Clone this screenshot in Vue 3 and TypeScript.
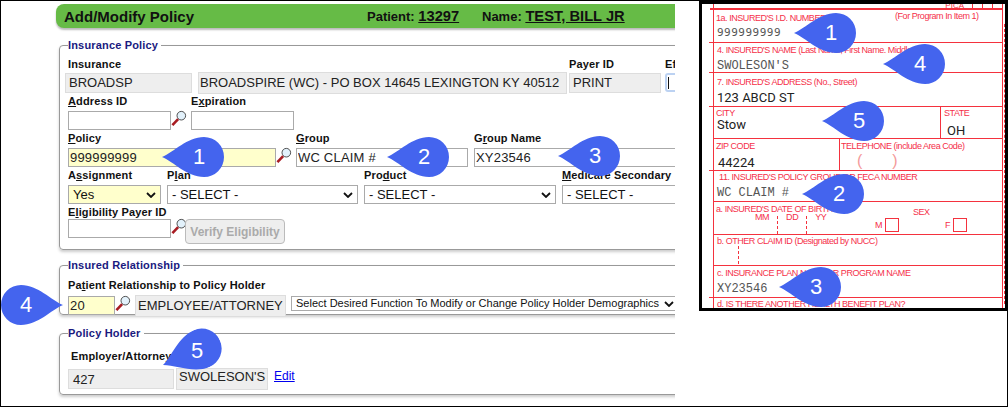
<script setup lang="ts">
interface Pin { n: number; x: number; y: number; rot: number }
const pins: Pin[] = [
  { n: 1, x: 162, y: 157, rot: 0 },
  { n: 2, x: 387, y: 157, rot: 0 },
  { n: 3, x: 558, y: 156, rot: 0 },
  { n: 4, x: 63, y: 305, rot: 180 },
  { n: 5, x: 163, y: 365, rot: -23 },
  { n: 1, x: 794, y: 33, rot: 0 },
  { n: 4, x: 883, y: 64, rot: 0 },
  { n: 5, x: 822, y: 121, rot: 0 },
  { n: 2, x: 802, y: 194, rot: 0 },
  { n: 3, x: 779, y: 287, rot: 0 },
]
function pinStyle(p: Pin) {
  return { left: `${p.x}px`, top: `${p.y - 20}px`, transform: `rotate(${p.rot}deg)` }
}
function numStyle(p: Pin) {
  const a = (p.rot * Math.PI) / 180
  return { left: `${p.x + 37 * Math.cos(a) - 12}px`, top: `${p.y + 37 * Math.sin(a) - 13}px` }
}
</script>

<template>
  <div class="frame">
    <main class="left">
      <header class="bar">
        <h1>Add/Modify Policy</h1>
        <div class="pat"><span>Patient:</span> <u>13297</u></div>
        <div class="nam"><span>Name:</span> <u>TEST, BILL JR</u></div>
      </header>

      <fieldset class="fs fs-policy">
        <legend>Insurance Policy</legend>
        <div class="row row-a">
          <div class="field w-ins"><label>Insurance</label><div class="ro ro-ins">BROADSP</div></div>
          <div class="field w-name"><label>&nbsp;</label><div class="ro ro-name">BROADSPIRE (WC) - PO BOX 14645 LEXINGTON KY 40512</div></div>
          <div class="field w-pay"><label>Payer ID</label><div class="ro ro-ins">PRINT</div></div>
          <div class="field w-eff"><label>Effective</label><div class="focus"><i></i></div></div>
        </div>
        <div class="row">
          <div class="field"><label><u>A</u>ddress ID</label>
            <div class="ctl"><input class="in w103" /><svg class="mag" viewBox="0 0 16 16"><circle cx="11" cy="5" r="4.6" fill="#e2f1fb" stroke="#333" stroke-width=".9"/><path d="M7.6 8.6 1.5 15" stroke="#a81c22" stroke-width="2.8"/></svg></div></div>
          <div class="field exp"><label>E<u>x</u>piration</label><input class="in w103" /></div>
        </div>
        <div class="row">
          <div class="field"><label><u>P</u>olicy</label>
            <div class="ctl"><input class="in req w208" value="999999999" /><svg class="mag" viewBox="0 0 16 16"><circle cx="11" cy="5" r="4.6" fill="#e2f1fb" stroke="#333" stroke-width=".9"/><path d="M7.6 8.6 1.5 15" stroke="#a81c22" stroke-width="2.8"/></svg></div></div>
          <div class="field grp"><label><u>G</u>roup</label><input class="in w172" value="WC CLAIM #" /></div>
          <div class="field gname"><label>G<u>r</u>oup Name</label><input class="in w240" value="XY23546" /></div>
        </div>
        <div class="row row-sel">
          <div class="field"><label>A<u>s</u>signment</label>
            <div class="sel w93 req"><select><option>Yes</option></select><svg viewBox="0 0 10 6"><path d="M1 1l4 4 4-4" fill="none" stroke="#111" stroke-width="1.8"/></svg></div></div>
          <div class="field"><label>P<u>l</u>an</label>
            <div class="sel w191"><select><option>- SELECT -</option></select><svg viewBox="0 0 10 6"><path d="M1 1l4 4 4-4" fill="none" stroke="#111" stroke-width="1.8"/></svg></div></div>
          <div class="field"><label>Pro<u>d</u>uct</label>
            <div class="sel w192"><select><option>- SELECT -</option></select><svg viewBox="0 0 10 6"><path d="M1 1l4 4 4-4" fill="none" stroke="#111" stroke-width="1.8"/></svg></div></div>
          <div class="field"><label><u>M</u>edicare Secondary</label>
            <div class="sel w192"><select><option>- SELECT -</option></select></div></div>
        </div>
        <div class="row">
          <div class="field"><label>E<u>l</u>igibility Payer ID</label>
            <div class="ctl"><input class="in w103" /><svg class="mag" viewBox="0 0 16 16"><circle cx="11" cy="5" r="4.6" fill="#e2f1fb" stroke="#333" stroke-width=".9"/><path d="M7.6 8.6 1.5 15" stroke="#a81c22" stroke-width="2.8"/></svg><button class="verify" disabled>Verify Eligibility</button></div></div>
        </div>
      </fieldset>

      <fieldset class="fs fs-rel">
        <legend>Insured Relationship</legend>
        <label class="lone">Pa<u>t</u>ient Relationship to Policy Holder</label>
        <div class="ctl">
          <input class="in req w47" value="20" />
          <svg class="mag" viewBox="0 0 16 16"><circle cx="11" cy="5" r="4.6" fill="#e2f1fb" stroke="#333" stroke-width=".9"/><path d="M7.6 8.6 1.5 15" stroke="#a81c22" stroke-width="2.8"/></svg>
          <div class="ro ro-rel">EMPLOYEE/ATTORNEY</div>
          <div class="sel func"><select><option>Select Desired Function To Modify or Change Policy Holder Demographics</option></select><svg viewBox="0 0 10 6"><path d="M1 1l4 4 4-4" fill="none" stroke="#111" stroke-width="1.8"/></svg></div>
        </div>
      </fieldset>

      <fieldset class="fs fs-hold">
        <legend>Policy Holder</legend>
        <label class="lone emp">Employer/Attorney</label>
        <div class="ctl hold">
          <div class="ro ro-427">427</div>
          <div class="ro ro-swo">SWOLESON'S</div>
          <a class="edit" href="#">Edit</a>
        </div>
      </fieldset>
    </main>

    <aside class="scan">
      <div class="sheet">
        <div class="pica"><span>PICA</span><b></b><b></b><b></b></div>
        <div class="r r1 tick">
          <div class="between"><span class="t">1a. INSURED'S I.D. NUMBER</span><span class="t prog">(For Program In Item 1)</span></div>
          <div class="mono sans">999999999</div>
        </div>
        <div class="r r2 tick"><span class="t ind">4. INSURED'S NAME (Last Name, First Name. Middle Initial)</span><div class="mono">SWOLESON'S</div></div>
        <div class="r r3 tick"><span class="t ind">7. INSURED'S ADDRESS (No., Street)</span><div class="typed">123 ABCD ST</div></div>
        <div class="r r4 split">
          <div class="cell city"><span class="t">CITY</span><div class="typed stow">Stow</div></div>
          <div class="cell state"><span class="t">STATE</span><div class="typed oh">OH</div></div>
        </div>
        <div class="r r5 split tick">
          <div class="cell zip"><span class="t">ZIP CODE</span><div class="typed z">44224</div></div>
          <div class="cell tel"><span class="t">TELEPHONE (include Area Code)</span><div class="parens"><span>(</span><span>)</span></div></div>
        </div>
        <div class="r r6"><span class="t ind2">11. INSURED'S POLICY GROUP OR FECA NUMBER</span><div class="mono">WC CLAIM #</div></div>
        <div class="r r7">
          <div class="dob">
            <span class="t">a. INSURED'S DATE OF BIRTH</span>
            <div class="mdy"><span class="t">MM</span><i class="dash"></i><span class="t">DD</span><i class="dash"></i><span class="t">YY</span></div>
          </div>
          <div class="sex">
            <span class="t sx">SEX</span>
            <div class="boxes"><span class="t">M</span><b></b><span class="t f">F</span><b></b></div>
          </div>
        </div>
        <div class="r r8"><span class="t ind">b. OTHER CLAIM ID (Designated by NUCC)</span><i class="dash d2"></i></div>
        <div class="r r9 tick"><span class="t ind">c. INSURANCE PLAN NAME OR PROGRAM NAME</span><div class="mono">XY23546</div></div>
        <div class="r r10"><span class="t ind">d. IS THERE ANOTHER HEALTH BENEFIT PLAN?</span></div>
      </div>
      <div class="perf"></div>
    </aside>

    <template v-for="(p, i) in pins" :key="i">
      <svg class="pin" :style="pinStyle(p)" viewBox="0 0 62 40" width="62" height="40">
        <path d="M0 20C12 15 25 0 42 0a20 20 0 0 1 0 40C25 40 12 25 0 20Z" fill="#4464ee"/>
      </svg>
      <span class="num" :style="numStyle(p)">{{ p.n }}</span>
    </template>
  </div>
</template>

<style>
html, body { margin: 0; background: #fff; }
</style>

<style scoped>
.frame { position: relative; box-sizing: border-box; width: 1008px; height: 407px; border: 1px solid #000; display: flex; overflow: hidden; background: #fff; font-family: "Liberation Sans", Arial, sans-serif; color: #111; }
.left { width: 674px; flex: none; overflow: hidden; padding-left: 55px; box-sizing: border-box; }
.bar { height: 24px; width: 700px; margin-top: 3px; background: #66bb46; border-radius: 8px 0 0 8px; box-shadow: 0 2px 2px #bbb; display: flex; align-items: center; color: #111; }
.bar h1 { margin: 0 0 0 8px; font-size: 15px; font-weight: bold; width: 303px; }
.pat, .nam { font-weight: bold; font-size: 13px; }
.pat u, .nam u { font-size: 14.7px; }
.pat { width: 115px; }
.fs { margin: 0 0 0 3px; width: 700px; box-sizing: border-box; border: 1px solid #999; border-radius: 4px; padding: 0 0 0 8px; min-width: 0; box-shadow: 0 2px 3px #ccc; }
legend { padding: 0 3px 0 0; margin-left: 0; font-size: 11px; font-weight: bold; line-height: 13px; color: #1a1a80; letter-spacing: .17px; }
.fs-policy { margin-top: 11px; height: 211px; }
.fs-rel { margin-top: 9px; height: 56px; }
.fs-hold { margin-top: 12px; height: 68px; }
label { display: block; height: 17px; line-height: 14px; font-size: 11px; font-weight: bold; letter-spacing: .13px; white-space: nowrap; color: #111; }
.row { display: flex; height: 37px; }
.row-a { margin-left: -3px; margin-top: 5px; }
.row-a label { height: 16px; padding-left: 3px; }
.row-sel { gap: 6px; }
.field { display: flex; flex-direction: column; flex: none; }
.w-ins { width: 133px; }
.w-name { width: 371px; }
.w-pay { width: 96px; }
.w-pay label { padding-left: 0; }
.w-eff label { padding-left: 0; }
.ro { box-sizing: border-box; background: #eee; border: 1px solid #ddd; font-size: 13px; color: #222; white-space: nowrap; overflow: hidden; padding-left: 3px; line-height: 18px; }
.ro-ins { height: 20px; }
.w-ins .ro { width: 127px; }
.w-pay .ro { width: 92px; }
.ro-name { width: 369px; height: 23px; padding-left: 1px; line-height: 19px; }
.focus { width: 30px; height: 19px; box-sizing: border-box; border: 2px solid #bcd2f2; border-radius: 3px; padding: 2px 1px; }
.focus i { display: block; width: 1px; height: 12px; background: #111; }
.ctl { display: flex; align-items: flex-start; }
.in { box-sizing: border-box; height: 19px; border: 1px solid #aaa; padding: 0 0 0 1px; margin: 0; font: 13px "Liberation Sans", Arial, sans-serif; letter-spacing: .2px; color: #222; background: #fff; outline: none; border-radius: 0; }
.w103 { width: 103px; }
.w208 { width: 208px; }
.w172 { width: 172px; }
.w240 { width: 240px; }
.w47 { width: 47px; }
.mag { width: 15px; height: 15px; flex: none; overflow: visible; }
.exp { margin-left: 5px; }
.grp { margin-left: 5px; }
.gname { margin-left: 6px; }
.sel { position: relative; box-sizing: border-box; height: 19px; border: 1px solid #aaa; flex: none; background: #fff; }
.sel select { appearance: none; display: block; width: 100%; height: 100%; border: 0; padding: 0 0 0 4px; margin: 0; font: 13px "Liberation Sans", Arial, sans-serif; color: #111; background: transparent; outline: none; }
.sel svg { position: absolute; z-index: 1; right: 4px; top: 6px; width: 10px; height: 6px; }
.in.req, .sel.req { background: #ffc; }
.w93 { width: 93px; }
.w191 { width: 191px; }
.w192 { width: 192px; }
.verify { box-sizing: border-box; width: 100px; height: 25px; border: 1px solid #bbb; border-radius: 4px; background: #eee; color: #aaa; font: bold 12px "Liberation Sans", Arial, sans-serif; padding: 0; margin: 0 0 0 -1px; }
.lone { height: 18px; margin-top: 6px; }
.ro-rel { width: 151px; height: 22px; margin: -1px 0 0 5px; padding: 0 0 0 2px; line-height: 20px; font-size: 13px; }
.func { width: 400px; height: 15px; margin-left: 5px; }
.sel.func select { font-size: 11px; padding-left: 4px; line-height: 13px; }
.func svg { left: 372px; right: auto; top: 4px; }
.emp { margin: 9px 0 5px 3px; height: 14px; }
.ro-427 { width: 106px; height: 20px; margin-top: 1px; padding-left: 4px; line-height: 20px; }
.ro-swo { width: 92px; height: 22px; margin-left: 2px; padding-left: 2px; line-height: 15px; }
.edit { margin: 1px 0 0 6px; font-size: 12px; line-height: 14px; color: #00e; text-decoration: underline; }

.scan { position: relative; box-sizing: border-box; flex: none; width: 308px; height: 310px; margin-left: 24px; border: solid #000; border-width: 3px 2px 3px 3px; padding-left: 11px; overflow: hidden; background: #fff; }
.sheet { width: 288px; border-left: 1px solid #f4323e; border-right: 1px solid #f4323e; }
.pica { height: 4px; position: relative; border-bottom: 2px solid #f4323e; display: flex; justify-content: flex-end; margin-left: -4px; }
.pica span { font-size: 8px; color: #f4323e; line-height: 6px; margin-right: 8px; margin-top: -1px; }
.pica b { width: 9px; height: 4px; border-left: 1px solid #f4323e; }
.t { display: block; font-size: 9px; letter-spacing: -.45px; color: #f5304a; white-space: nowrap; line-height: 12px; }
.r { box-sizing: border-box; border-bottom: 1px solid #f4323e; position: relative; padding-left: 2px; }
.tick::before { content: ""; position: absolute; left: -5px; bottom: -1px; width: 5px; height: 1px; background: #f4323e; }
.r1 { height: 33px; padding-top: 2px; }
.r2 { height: 30px; padding-top: 1px; }
.r3 { height: 34px; padding-top: 3px; }
.r4 { height: 32px; }
.r5 { height: 32px; }
.r6 { height: 31px; }
.r7 { height: 33px; display: flex; }
.r8 { height: 31px; }
.r9 { height: 32px; padding-top: 1px; }
.r10 { height: 14px; border: 0; }
.between { display: flex; }
.prog { margin-left: 69px; margin-top: -2px; }
.ind { margin-left: 1px; }
.ind2 { margin-left: 3px; }
.mono { font: 12px/14px "Liberation Mono", monospace; color: #555; margin-top: 3px; margin-left: 1px; white-space: pre; }
.r1 .mono { margin-top: 2px; }
.sans { font-family: "DejaVu Sans Mono", monospace; font-size: 11px; letter-spacing: .5px; }
.typed { font: 13px/15px Roboto, "Liberation Sans", sans-serif; color: #222; margin-left: 1px; margin-top: 2px; }
.split { display: flex; padding-left: 0; }
.cell { box-sizing: border-box; padding-left: 2px; height: 100%; }
.city { width: 227px; border-right: 1px solid #f4323e; }
.stow { margin-top: -2px; }
.state { padding-left: 3px; }
.oh { margin-left: 3px; margin-top: 4px; }
.zip { width: 126px; border-right: 1px solid #f4323e; padding-left: 2px; padding-top: 1px; }
.z { margin-top: 3px; margin-left: 2px; }
.tel { padding-left: 1px; padding-top: 1px; }
.parens { display: flex; gap: 30px; margin-left: 16px; font: 16px/17px "Liberation Sans", sans-serif; color: #f49a9a; }
.dob { width: 170px; padding-top: 3px; }
.dob .t { line-height: 8px; }
.mdy { display: flex; align-items: flex-start; margin: 0 0 0 39px; gap: 8px; }
.mdy .dash { height: 18px; margin-top: 3px; }
.dash { display: block; width: 0; border-left: 1px dashed #f4323e; }
.d2 { height: 18px; margin: -1px 0 0 22px; }
.sex { flex: 1; }
.sx { margin: 4px 0 0 27px; }
.boxes { display: flex; align-items: center; margin-left: -11px; }
.boxes b { display: block; width: 14px; height: 14px; box-sizing: border-box; border: 1px solid #f4323e; margin-left: 3px; }
.boxes .f { margin-left: 46px; }
.perf { position: absolute; right: 0; top: 20px; height: 280px; width: 0; border-right: 1px dashed #f4323e; }

.pin { position: absolute; transform-origin: 0 20px; margin: -1px 0 0 -1px; }
.num { position: absolute; width: 24px; margin: -1px 0 0 -1px; text-align: center; color: #fff; font-size: 22px; line-height: 26px; }
</style>
